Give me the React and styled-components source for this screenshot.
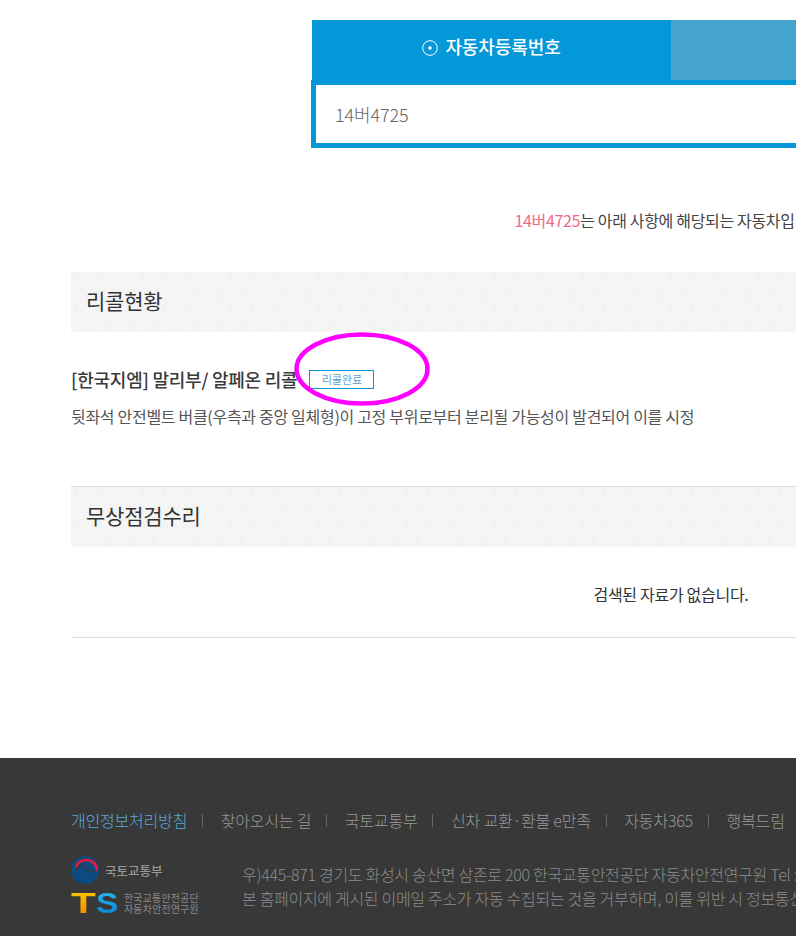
import React from 'react';
import styled, { createGlobalStyle } from 'styled-components';

const GlobalStyle = createGlobalStyle`
    html, body {
        margin: 0;
        padding: 0;
        overflow: hidden;
        background: #fff;
    }
    body {
        font-family: "Noto Sans CJK KR", "Noto Sans", sans-serif;
        color: #333;
    }
`;

const Page = styled.div`
    width: 1342px;
    height: 936px;
    display: flex;
    flex-direction: column;
`;

const Main = styled.main`
    width: 1200px;
    height: 758px;
    margin-left: 71px;
    box-sizing: border-box;
    padding-top: 20px;
`;

const SearchBox = styled.div`
    width: 720px;
    margin: 0 auto;
`;

const Tabs = styled.div`
    display: flex;
    height: 60px;
    padding-left: 1px;
`;

const Tab = styled.div`
    flex: ${props => (props.$active ? '0 0 359px' : '1')};
    display: flex;
    align-items: center;
    justify-content: center;
    gap: 7px;
    box-sizing: border-box;
    padding-bottom: 8px;
    color: #fff;
    font-size: 18px;
    font-weight: 500;
    letter-spacing: -0.1px;
    background: ${props => (props.$active ? '#0498d8' : '#45a5d0')};

    svg {
        margin-top: 4px;
    }
`;

const PlateInput = styled.div`
    height: 68px;
    box-sizing: border-box;
    border: 5px solid #0498d8;
    padding-left: 19px;
    display: flex;
    align-items: center;
    font-size: 18px;
    font-weight: 300;
    color: #666;
    letter-spacing: -0.1px;
`;

const ResultText = styled.p`
    margin: 61px 0 0;
    height: 22px;
    line-height: 22px;
    text-align: center;
    font-size: 16px;
    color: #444;
    letter-spacing: -0.33px;
`;

const Plate = styled.span`
    color: #ee6a8a;
`;

const SectionTitle = styled.h2`
    margin: ${props => props.$top}px 0 0;
    height: 60px;
    line-height: 56px;
    padding-left: 15px;
    font-size: 21px;
    font-weight: 400;
    letter-spacing: -0.2px;
    color: #333;
    background-color: #f5f5f5;
    background-image:
        linear-gradient(60deg, transparent 48%, #f0f0f0 49%, #f0f0f0 51%, transparent 52%),
        linear-gradient(120deg, transparent 48%, #f0f0f0 49%, #f0f0f0 51%, transparent 52%);
    background-size: 22px 30px;
    background-position: 0 0, 11px 0;
    ${props => props.$ruled && 'border-top: 1px solid #ddd;'}
`;

const RecallRow = styled.div`
    position: relative;
    margin-top: 35px;
    display: flex;
    align-items: center;
    gap: 12px;
    height: 24px;
`;

const RecallName = styled.h3`
    margin: 0;
    font-size: 18px;
    font-weight: 500;
    color: #3a3a3a;
    letter-spacing: -0.24px;
`;

const StatusBadge = styled.span`
    width: 65px;
    height: 19px;
    box-sizing: border-box;
    border: 1px solid #0498d8;
    display: flex;
    align-items: center;
    justify-content: center;
    font-size: 11px;
    color: #5a9fd0;
`;

const Annotation = styled.svg`
    position: absolute;
    left: 223px;
    top: -35px;
    width: 136px;
    height: 74px;
`;

const RecallDesc = styled.p`
    margin: 14px 0 0;
    line-height: 22px;
    font-size: 16px;
    color: #555;
    letter-spacing: -0.3px;
`;

const EmptyList = styled.div`
    height: 91px;
    box-sizing: border-box;
    border-bottom: 1px solid #ddd;
    padding-top: 36px;
    line-height: 22px;
    text-align: center;
    font-size: 16px;
    color: #333;
    letter-spacing: -0.3px;
`;

const Footer = styled.footer`
    flex: 1;
    background: #383838;
    padding: 50px 0 0 71px;
`;

const FooterLinks = styled.nav`
    display: flex;
    align-items: center;
    height: 24px;
`;

const FooterLink = styled.a`
    font-size: 16px;
    font-weight: 300;
    letter-spacing: -0.2px;
    color: ${props => (props.$accent ? '#5ba8dc' : '#999')};
`;

const Divider = styled.i`
    width: 1px;
    height: 13px;
    margin: 0 17.6px 0 15px;
    background: #666;
`;

const FooterBody = styled.div`
    display: flex;
    margin-top: 25px;
`;

const Logos = styled.div`
    width: 171px;
    display: flex;
    flex-direction: column;
    gap: 7px;
`;

const MinistryLogo = styled.div`
    display: flex;
    align-items: center;
    gap: 6px;
    height: 28px;
    padding-bottom: 2px;
    box-sizing: border-box;
    font-size: 12.5px;
    font-weight: 500;
    color: #999;
`;

const AgencyLogo = styled.div`
    display: flex;
    align-items: center;
    height: 22px;
`;

const Mark = styled.span`
    display: block;
    flex: none;
    width: ${props => props.$w}px;
    margin-right: ${props => props.$after}px;
    font-family: "Liberation Sans", sans-serif;
    font-weight: 700;
    font-size: 29px;
    line-height: 22px;
    transform: scaleX(${props => props.$sx});
    transform-origin: left center;
    background: ${props => props.$fill};
    -webkit-background-clip: text;
    background-clip: text;
    color: transparent;
`;

const AgencyName = styled.div`
    margin-left: 6px;
    font-size: 10px;
    line-height: 11px;
    color: #888;
    white-space: nowrap;
    letter-spacing: 0.15px;
`;

const Address = styled.div`
    margin-top: 5px;
    font-size: 16px;
    font-weight: 300;
    line-height: 24px;
    letter-spacing: -0.3px;
    color: #8c8c8c;
    white-space: nowrap;
`;

function CircleDot() {
    return (
        <svg width="16" height="16" viewBox="0 0 16 16" fill="none">
            <circle cx="8" cy="8" r="7.3" stroke="#fff" strokeWidth="1" />
            <circle cx="8" cy="8" r="1.8" fill="#fff" />
        </svg>
    );
}

function Taegeuk() {
    return (
        <svg width="28" height="28" viewBox="0 0 28 28" fill="none">
            <circle cx="14" cy="14" r="14" fill="#0d4a82" />
            <path d="M5 12 C6 5 14 2.5 20 5 C24 7 26 10 26 15" stroke="#e8193c" strokeWidth="2.6" />
            <path d="M5.5 15 C6 9 12 8 15 12 C17 16 22 17 23.5 14" stroke="#383838" strokeWidth="1.5" />
        </svg>
    );
}

export default function App() {
    return (
        <Page>
            <GlobalStyle />
            <Main>
                <SearchBox>
                    <Tabs>
                        <Tab $active><CircleDot />자동차등록번호</Tab>
                        <Tab>차대번호</Tab>
                    </Tabs>
                    <PlateInput>14버4725</PlateInput>
                </SearchBox>
                <ResultText><Plate>14버4725</Plate>는 아래 사항에 해당되는 자동차입니다.</ResultText>

                <SectionTitle $top={41}>리콜현황</SectionTitle>
                <RecallRow>
                    <RecallName>[한국지엠] 말리부/ 알페온 리콜</RecallName>
                    <StatusBadge>리콜완료</StatusBadge>
                    <Annotation viewBox="0 0 136 74" fill="none">
                        <ellipse cx="68" cy="37" rx="65.5" ry="34.5" stroke="#ff00ff" strokeWidth="4.5" />
                    </Annotation>
                </RecallRow>
                <RecallDesc>뒷좌석 안전벨트 버클(우측과 중앙 일체형)이 고정 부위로부터 분리될 가능성이 발견되어 이를 시정</RecallDesc>

                <SectionTitle $top={59} $ruled>무상점검수리</SectionTitle>
                <EmptyList>검색된 자료가 없습니다.</EmptyList>
            </Main>
            <Footer>
                <FooterLinks>
                    <FooterLink $accent>개인정보처리방침</FooterLink>
                    <Divider />
                    <FooterLink>찾아오시는 길</FooterLink>
                    <Divider />
                    <FooterLink>국토교통부</FooterLink>
                    <Divider />
                    <FooterLink>신차 교환·환불 e만족</FooterLink>
                    <Divider />
                    <FooterLink>자동차365</FooterLink>
                    <Divider />
                    <FooterLink>행복드림</FooterLink>
                </FooterLinks>
                <FooterBody>
                    <Logos>
                        <MinistryLogo><Taegeuk />국토교통부</MinistryLogo>
                        <AgencyLogo>
                            <Mark $w={18} $after={7} $sx={1.4} $fill="linear-gradient(#ffc400, #f08a00)">T</Mark>
                            <Mark $w={20} $after={2} $sx={1.15} $fill="linear-gradient(#25b8ec, #0a86d6)">S</Mark>
                            <AgencyName>한국교통안전공단<br />자동차안전연구원</AgencyName>
                        </AgencyLogo>
                    </Logos>
                    <Address>
                        우)445-871 경기도 화성시 송산면 삼존로 200 한국교통안전공단 자동차안전연구원 Tel : 031-369-0114<br />
                        본 홈페이지에 게시된 이메일 주소가 자동 수집되는 것을 거부하며, 이를 위반 시 정보통신망법에 의해 처벌됨을 유념하시기 바랍니다.
                    </Address>
                </FooterBody>
            </Footer>
        </Page>
    );
}
